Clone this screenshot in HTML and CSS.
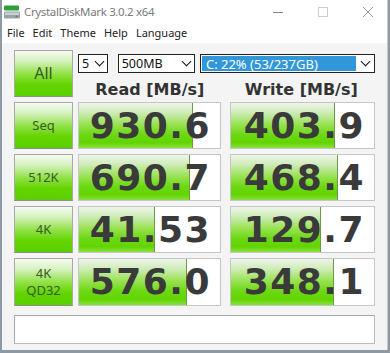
FILE: index.html
```html
<!DOCTYPE html>
<html lang="en">
<head>
    <meta charset="UTF-8">
    <title>CrystalDiskMark 3.0.2 x64</title>
    <link rel="stylesheet" href="styles.css">
</head>
<body>
<div class="window">
    <!-- Title bar -->
    <div class="titlebar">
        <svg class="app-icon" width="18" height="14" viewBox="0 0 18 14">
            <rect x="1" y="0.5" width="15" height="5" rx="1" fill="#2e9e3a"/>
            <rect x="1" y="6.5" width="16" height="7" rx="1" fill="#9aa3a8"/>
            <rect x="2" y="7.5" width="14" height="2.5" fill="#c9d0d4"/>
            <circle cx="13.5" cy="11.5" r="1" fill="#4a8f3a"/>
        </svg>
        <span class="title">CrystalDiskMark 3.0.2 x64</span>
        <div class="controls">
            <svg width="10" height="12" viewBox="0 0 10 12"><line x1="0" y1="6.5" x2="10" y2="6.5" stroke="#888" stroke-width="1"/></svg>
            <svg width="10" height="12" viewBox="0 0 10 12"><rect x="0.5" y="1.5" width="9" height="9" fill="none" stroke="#ccc" stroke-width="1"/></svg>
            <svg width="10" height="12" viewBox="0 0 10 12"><path d="M0 1 L10 11 M10 1 L0 11" stroke="#999" stroke-width="1"/></svg>
        </div>
    </div>

    <!-- Menu -->
    <div class="menubar">
        <span>File</span><span>Edit</span><span>Theme</span><span>Help</span><span>Language</span>
    </div>

    <!-- Main panel -->
    <div class="panel">
        <div class="grid">
            <div class="label-btn big">All</div>
            <div class="top-area">
                <div class="selects">
                    <div class="select count">5<span class="chev"></span></div>
                    <div class="select size">500MB<span class="chev"></span></div>
                    <div class="select drive"><span class="drive-text">C: 22% (53/237GB)</span><span class="drive-arrow"><span class="chev"></span></span></div>
                </div>
                <div class="heads">
                    <div class="head">Read [MB/s]</div>
                    <div class="head">Write [MB/s]</div>
                </div>
            </div>

            <div class="label-btn">Seq</div>
            <div class="cell"><div class="bar" style="width: 80%"></div><div class="value">930.6</div></div>
            <div class="cell write"><div class="bar" style="width: 72%"></div><div class="value">403.9</div></div>

            <div class="label-btn">512K</div>
            <div class="cell"><div class="bar" style="width: 78%"></div><div class="value">690.7</div></div>
            <div class="cell write"><div class="bar" style="width: 74%"></div><div class="value">468.4</div></div>

            <div class="label-btn">4K</div>
            <div class="cell"><div class="bar" style="width: 53%"></div><div class="value">41.53</div></div>
            <div class="cell write"><div class="bar" style="width: 62%"></div><div class="value">129.7</div></div>

            <div class="label-btn two">4K<br>QD32</div>
            <div class="cell"><div class="bar" style="width: 76%"></div><div class="value">576.0</div></div>
            <div class="cell write"><div class="bar" style="width: 71%"></div><div class="value">348.1</div></div>
        </div>
        <div class="status"></div>
    </div>
</div>
</body>
</html>
```

FILE: styles.css
```css
body {
    margin: 0;
    padding: 0;
    background: #8d99a4;
    font-family: "Noto Sans", "Open Sans", sans-serif;
}

.window {
    width: 386px;
    height: 350px;
    margin-left: 2px;
    background: #f4f4f4;
    border-right: 1px solid #c8c8c8;
    box-sizing: border-box;
}

/* title bar */
.titlebar {
    height: 22px;
    background: #fff;
    display: flex;
    align-items: center;
    padding-left: 1px;
}

.app-icon {
    margin-top: 2px;
}

.title {
    margin-left: 3px;
    font-size: 11.5px;
    letter-spacing: -0.35px;
    color: #7a7a7a;
    margin-top: 1px;
}

.controls {
    margin-left: auto;
    display: flex;
    gap: 35px;
    padding-right: 14px;
    margin-top: 2px;
}

/* menu */
.menubar {
    height: 21px;
    background: #fff;
    display: flex;
    gap: 8px;
    padding-left: 5px;
    font-size: 11px;
    color: #222;
    align-items: center;
}

/* panel */
.panel {
    padding: 7px 11px 0 12px;
}

.grid {
    display: grid;
    grid-template-columns: 59px 143px 149px;
    grid-template-rows: 47px 47px 47px 47px 48px;
    column-gap: 5px;
    row-gap: 5px;
}

.label-btn {
    box-sizing: border-box;
    border: 1px solid #a9a9a9;
    border-bottom-color: #8e8e8e;
    background: linear-gradient(to bottom, #f6fbf2 0%, #d6f2c0 22%, #92e24a 50%, #62d400 75%, #5ad000 100%);
    color: #3b5a20;
    font-size: 13px;
    display: flex;
    align-items: center;
    justify-content: center;
    text-align: center;
    line-height: 17px;
}

.label-btn.big {
    font-size: 16px;
}

.top-area {
    grid-column: 2 / 4;
    display: flex;
    flex-direction: column;
}

.selects {
    display: flex;
    margin-top: 4px;
    height: 19px;
}

.select {
    box-sizing: border-box;
    height: 19px;
    border: 1px solid #222;
    background: #fff;
    font-size: 12.5px;
    color: #111;
    display: flex;
    align-items: center;
    padding-left: 3px;
}

.select.count {
    width: 30px;
}

.select.size {
    width: 78px;
    margin-left: 10px;
}

.select.drive {
    width: 177px;
    margin-left: 5px;
    padding: 0;
}

.chev {
    margin-left: auto;
    margin-right: 4px;
    width: 6px;
    height: 6px;
    border-right: 1.6px solid #111;
    border-bottom: 1.6px solid #111;
    transform: rotate(45deg);
    margin-top: -4px;
}

.drive-text {
    flex: 1;
    align-self: stretch;
    background: #3297d8;
    color: #fff;
    font-size: 13px;
    padding-left: 4px;
    display: flex;
    align-items: center;
    margin: 1px;
}

.drive-arrow {
    width: 17px;
    display: flex;
    align-items: center;
}

.drive-arrow .chev {
    margin-right: 5px;
}

.heads {
    display: flex;
    margin-top: 7px;
}

.head {
    font-family: "DejaVu Sans", sans-serif;
    font-weight: bold;
    font-size: 16px;
    color: #333;
    text-align: center;
}

.head:first-child {
    width: 140px;
    margin-left: 3px;
}

.head:last-child {
    width: 150px;
    margin-left: 9px;
}

/* result cells */
.cell {
    position: relative;
    box-sizing: border-box;
    border: 1px solid #c6c6c6;
    background: #fff;
    overflow: hidden;
}

.cell.write {
    margin-left: 4px;
}

.bar {
    position: absolute;
    left: 0;
    top: 0;
    bottom: 0;
    background: linear-gradient(to bottom, #eef5ea 0%, #d0ecbc 20%, #98e250 48%, #6cd814 70%, #62d400 88%, #88e040 100%);
    border-right: 1px solid #6c9a48;
}

.value {
    position: relative;
    font-family: "DejaVu Sans", sans-serif;
    font-weight: bold;
    font-size: 36px;
    letter-spacing: 1.5px;
    color: #3a3a3a;
    text-align: right;
    padding-right: 9px;
    line-height: 45px;
}

.status {
    margin-top: 9px;
    width: 361px;
    height: 29px;
    box-sizing: border-box;
    background: #fff;
    border: 1px solid #bcbcbc;
    border-top-color: #a8a8a8;
    border-left-color: #a8a8a8;
}
```
